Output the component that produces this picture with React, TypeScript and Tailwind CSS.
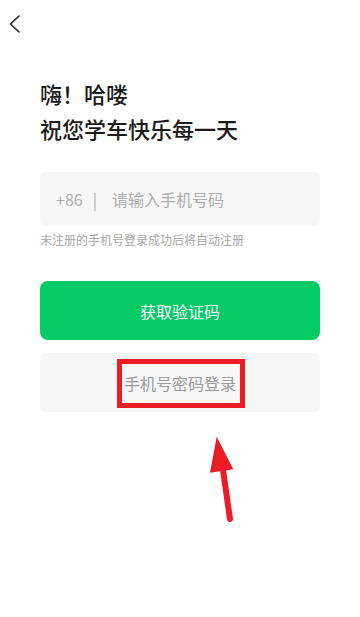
const FONT = '"Noto Sans CJK SC", "Noto Sans", sans-serif';

export default function App() {
  return (
    <div className="relative min-h-[617px] w-[360px] bg-white" style={{ fontFamily: FONT }}>
      {/* Top bar */}
      <div className="h-[48px]">
        <svg width="30" height="48" viewBox="0 0 30 48" fill="none">
          <polyline points="19,16 10.5,24 19,32" stroke="#222" strokeWidth="1.6" strokeLinecap="round" strokeLinejoin="round" />
        </svg>
      </div>

      <div className="px-10">
        {/* Greeting */}
        <div className="mt-[28px] text-[22px] font-medium leading-[35px] text-[#1a1a1a]">
          <div>嗨！哈喽</div>
          <div>祝您学车快乐每一天</div>
        </div>

        {/* Phone input */}
        <div className="mt-[26px] flex h-[54px] items-center rounded-md bg-[#f7f7f7] px-4 text-[16px] text-[#adadad]">
          <span>+86</span>
          <span className="ml-[10px]">|</span>
          <span className="ml-[15px]">请输入手机号码</span>
        </div>
        <p className="mt-[5px] text-[12px] leading-[18px] text-[#a6a6a6]">未注册的手机号登录成功后将自动注册</p>

        {/* Buttons */}
        <button className="mt-[32px] flex h-[59px] w-full items-center justify-center rounded-lg bg-[#05cb67] text-[16px] text-white">
          获取验证码
        </button>
        <div className="relative mt-[13px] flex h-[59px] w-full items-center justify-center rounded-md bg-[#f7f7f7] text-[16px] text-[#999]">
          手机号密码登录
          {/* Red highlight box */}
          <div className="absolute left-[77px] top-[6px] h-[49px] w-[128px] border-[5px] border-[#ec1c24]" />
        </div>
      </div>

      {/* Red arrow */}
      <svg className="absolute left-[200px] top-[430px]" width="45" height="95" viewBox="0 0 45 95">
        <polygon points="16.7,6.7 10,42.7 33.3,39.3" fill="#ec1c24" />
        <line x1="23" y1="40" x2="30" y2="89" stroke="#ec1c24" strokeWidth="6" strokeLinecap="round" />
      </svg>
    </div>
  );
}
